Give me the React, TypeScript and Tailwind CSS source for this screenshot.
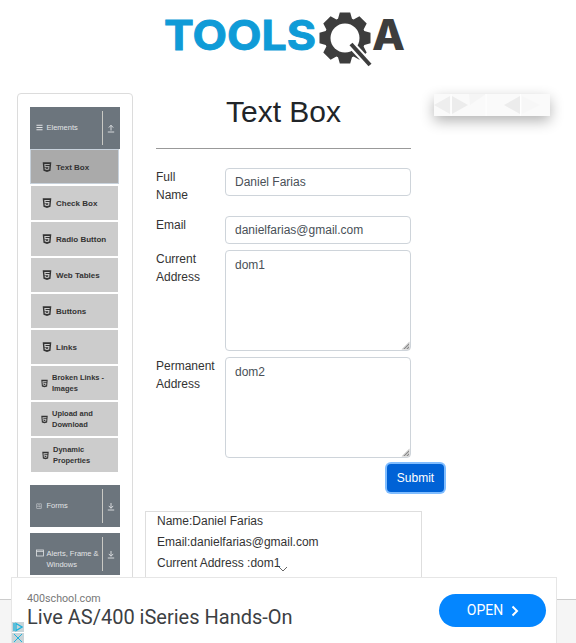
import { FaBars, FaWpforms } from "react-icons/fa";
import { AiFillHtml5 } from "react-icons/ai";

const arial = "font-['Liberation_Sans',Arial,sans-serif]";

function gearPoints() {
  const cx = 345, cy = 38, teeth = 8, ro = 26, ri = 20.5;
  const pts: string[] = [];
  for (let i = 0; i < teeth; i++) {
    const a = (i * 2 * Math.PI) / teeth - Math.PI / 2;
    const w = 0.2;
    const w2 = 0.3;
    for (const [r, d] of [[ri, -w2 - 0.05], [ro, -w], [ro, w], [ri, w2 + 0.05]] as const) {
      pts.push(`${(cx + r * Math.cos(a + d)).toFixed(1)},${(cy + r * Math.sin(a + d)).toFixed(1)}`);
    }
  }
  return pts.join(" ");
}

function Logo() {
  return (
    <svg width="250" height="60" viewBox="160 10 250 60" className="block">
      <text x="164" y="49.5" fontFamily="Inter,'Liberation Sans',sans-serif" fontWeight="700" fontSize="41" textLength="152" lengthAdjust="spacingAndGlyphs" fill="#0f9bd7" stroke="#0f9bd7" strokeWidth="0.9">TOOLS</text>
      <polygon points={gearPoints()} fill="#3d3d3d" />
      <circle cx="345" cy="38" r="14.5" fill="#fff" />
      <line x1="348" y1="41" x2="371" y2="66" stroke="#fff" strokeWidth="8" />
      <line x1="351" y1="44" x2="370" y2="65" stroke="#3d3d3d" strokeWidth="4" />
      <text x="372" y="50" fontFamily="Inter,'Liberation Sans',sans-serif" fontWeight="800" fontSize="42" textLength="33" lengthAdjust="spacingAndGlyphs" fill="#3d3d3d">A</text>
    </svg>
  );
}

function Arrow({ up }: { up?: boolean }) {
  return (
    <svg width="8" height="9" viewBox="0 0 8 9" fill="none" stroke="#e2e4e6" strokeWidth="0.9">
      {up ? <path d="M4 6.5 V1.5 M1.8 3.6 L4 1.2 L6.2 3.6" /> : <path d="M4 1 V6 M1.8 3.9 L4 6.3 L6.2 3.9" />}
      <path d="M0.8 8 H7.2" />
    </svg>
  );
}

function WindowIcon() {
  return (
    <svg width="8" height="8" viewBox="0 0 8 8" fill="none" stroke="#e2e4e6" strokeWidth="0.8">
      <rect x="0.5" y="1" width="7" height="6" />
      <path d="M0.5 2.4 H7.5" />
    </svg>
  );
}

function Header({ label, icon, up, two }: { label: string; icon: React.ReactNode; up?: boolean; two?: boolean }) {
  return (
    <div className="flex h-[42px] w-[90px] items-center bg-[#6c757d] text-[#e2e4e6]">
      <div className={`flex w-[72px] pl-[6px] text-[7.5px] leading-[11px] ${two ? "mt-[10px] items-start" : "mb-[2px] items-center"}`}>
        <span className="flex w-[10.5px] shrink-0 pt-[1px]">{icon}</span>
        <span className={two ? "w-[56px]" : ""}>{label}</span>
      </div>
      <div className="h-[34px] w-px bg-[#c9c9c4]" />
      <div className="flex flex-1 justify-center pr-[1px]">
        <Arrow up={up} />
      </div>
    </div>
  );
}

function Item({ label, active, two, nudge }: { label: string; active?: boolean; two?: boolean; nudge?: boolean }) {
  return (
    <div
      className={`flex items-center text-[7.5px] font-bold text-[#333] ${two ? "leading-[11px]" : ""} ${
        nudge ? "pl-[10px]" : two ? "pl-[9px]" : "pl-[10px]"
      } ${active ? "-ml-[1px] -mt-[1px] mb-[2px] h-[35px] w-[89px] border border-[#c8d2dc] bg-[#aaaaaa]" : "mb-[2px] h-[34px] w-[87px] bg-[#cccccc]"}`}
    >
      <span className={`flex shrink-0 ${two ? "w-[12px]" : "w-[15px]"}`}>
        <AiFillHtml5 size={two ? 9 : 12} color="#333" />
      </span>
      <span className={two ? "w-[64px]" : "pt-[2px] text-[8px]"}>{label}</span>
    </div>
  );
}

const inputCls =
  "block w-[186px] rounded-[4px] border border-[#ced4da] bg-white px-[9px] text-[12px] text-[#495057] outline-none";

function Area({ value }: { value: string }) {
  return (
    <div className="relative">
      <textarea className={`${inputCls} h-[101px] resize-none py-[5px] leading-[18px]`} readOnly value={value} />
      <svg width="9" height="9" viewBox="0 0 9 9" className="absolute bottom-[1px] right-[1px]">
        <path d="M8.5 0.5 L0.5 8.5 H8.5 Z" fill="#c4c4c4" />
        <path d="M8 3 L3 8 M8 6 L6 8" stroke="#8a8a8a" strokeWidth="1" />
      </svg>
    </div>
  );
}

function AdChoices() {
  return (
    <div className="absolute left-0 top-[44px] flex w-[12px] flex-col gap-px">
      <div className="flex h-[10px] items-center justify-center bg-[#cad4d8]">
        <svg width="10" height="10" viewBox="0 0 10 10">
          <path d="M3 1.5 L9 5 L3 8.5 Z" fill="none" stroke="#1fb3dc" strokeWidth="1.3" />
          <path d="M1 1 V9" stroke="#1fb3dc" strokeWidth="1.3" />
        </svg>
      </div>
      <div className="flex h-[10px] items-center justify-center bg-[#cad4d8]">
        <svg width="10" height="10" viewBox="0 0 10 10">
          <path d="M1 1 L9 9 M9 1 L1 9" stroke="#1fb3dc" strokeWidth="1" />
        </svg>
      </div>
    </div>
  );
}

function Carousel() {
  return (
    <div className="absolute left-[434px] top-[94px] h-[22px] w-[116px] bg-white shadow-[0_5px_14px_rgba(0,0,0,0.3)]">
      <svg width="116" height="22" viewBox="0 0 116 22" className="block">
        <rect width="116" height="22" fill="#fafafa" />
        <path d="M0 11 L16 2 V20 Z" fill="#eeeeee" />
        <path d="M18 2 L34 11 L18 20 Z" fill="#ececec" />
        <path d="M35 0 H52 L36 11 Z" fill="#f5f5f5" />
        <path d="M70 11 L86 2 V20 Z" fill="#ececec" />
        <path d="M88 2 L106 11 L88 20 Z" fill="#f7f7f7" />
        <path d="M17 0 V22 M52 0 V22 M86.5 0 V22" stroke="#ffffff" strokeWidth="1" />
      </svg>
    </div>
  );
}

export default function App() {
  return (
    <div className={`relative h-[643px] w-full overflow-hidden bg-white ${arial}`}>
      <div className="h-[599px] overflow-hidden">
        <div className="h-[93px] pl-[160px] pt-[10px]">
          <Logo />
        </div>
        <div className="flex pl-[17px]">
          <aside className="h-[600px] w-[116px] shrink-0 rounded-[4px] border border-[#dcdcdc] pl-[12px] pt-[13px]">
            <Header label="Elements" icon={<FaBars size={7} />} up />
            <div className="ml-[1px] mt-[1px] flex flex-col">
              <Item label="Text Box" active />
              <Item label="Check Box" />
              <Item label="Radio Button" />
              <Item label="Web Tables" />
              <Item label="Buttons" />
              <Item label="Links" />
              <Item label="Broken Links - Images" two />
              <Item label="Upload and Download" two />
              <Item label="Dynamic Properties" two nudge />
            </div>
            <div className="mt-[11px]">
              <Header label="Forms" icon={<FaWpforms size={6} />} />
            </div>
            <div className="mt-[6px]">
              <Header label="Alerts, Frame & Windows" icon={<WindowIcon />} two />
            </div>
          </aside>
          <main className="ml-[23px] w-[255px] shrink-0">
            <h1 className="h-[55px] pt-[0.5px] text-center text-[30px] leading-[36px] text-[#212529]">Text Box</h1>
            <div className="h-px bg-[#999]" />
            <form className="mt-[19px] text-[12px] leading-[18px] text-[#333]">
              <div className="flex">
                <label className="w-[69px]">Full<br />Name</label>
                <input className={`${inputCls} h-[28px]`} readOnly value="Daniel Farias" />
              </div>
              <div className="mt-[12px] flex">
                <label className="w-[69px]">Email</label>
                <input className={`${inputCls} h-[28px]`} readOnly value="danielfarias@gmail.com" />
              </div>
              <div className="mt-[6px] flex">
                <label className="w-[69px]">Current<br />Address</label>
                <Area value="dom1" />
              </div>
              <div className="mt-[6px] flex">
                <label className="w-[69px]">Permanent<br />Address</label>
                <Area value="dom2" />
              </div>
              <div className="mt-[6px] flex justify-end">
                <button type="button" className="-mr-[33px] h-[28px] w-[57px] rounded-[4px] bg-[#0062d6] text-[12px] text-white ring-[2px] ring-[#80bdff]">
                  Submit
                </button>
              </div>
            </form>
            <div className="-ml-[11px] mt-[19px] h-[200px] w-[277px] border border-[#dedede] pl-[11px] text-[12px] leading-[18px] text-[#333]">
              <p className="mb-[3px]">Name:Daniel Farias</p>
              <p className="mb-[3px]">Email:danielfarias@gmail.com</p>
              <p>Current Address :dom1</p>
            </div>
          </main>
        </div>
      </div>
      <div className="h-[44px] border-t border-[#cccccc] bg-[#f5f5f5]" />

      <Carousel />

      <svg width="10" height="6" viewBox="0 0 10 6" className="absolute left-[278px] top-[566px]">
        <path d="M1 1 L5 5 L9 1" fill="none" stroke="#555" strokeWidth="0.9" />
      </svg>

      <div className="absolute left-[11px] top-[577px] h-[66px] w-[546px] border border-b-0 border-[#e6e6e6] bg-white">
        <p className="absolute left-[15px] top-[15px] font-['Roboto',sans-serif] text-[10.7px] leading-[12px] text-[#777]">400school.com</p>
        <p className="absolute left-[15px] top-[27px] font-['Roboto',sans-serif] text-[20px] leading-[24px] text-[#3c4043]">Live AS/400 iSeries Hands-On</p>
        <div className="absolute left-[427px] top-[16px] flex h-[33px] w-[107px] items-center justify-center gap-[8px] rounded-full bg-[#0486ff] pl-[1px] font-['Roboto',sans-serif] text-[14px] text-white">
          OPEN
          <svg width="8" height="12" viewBox="0 0 8 12">
            <path d="M1.5 1.5 L6 6 L1.5 10.5" fill="none" stroke="#fff" strokeWidth="2" />
          </svg>
        </div>
        <AdChoices />
      </div>
    </div>
  );
}
